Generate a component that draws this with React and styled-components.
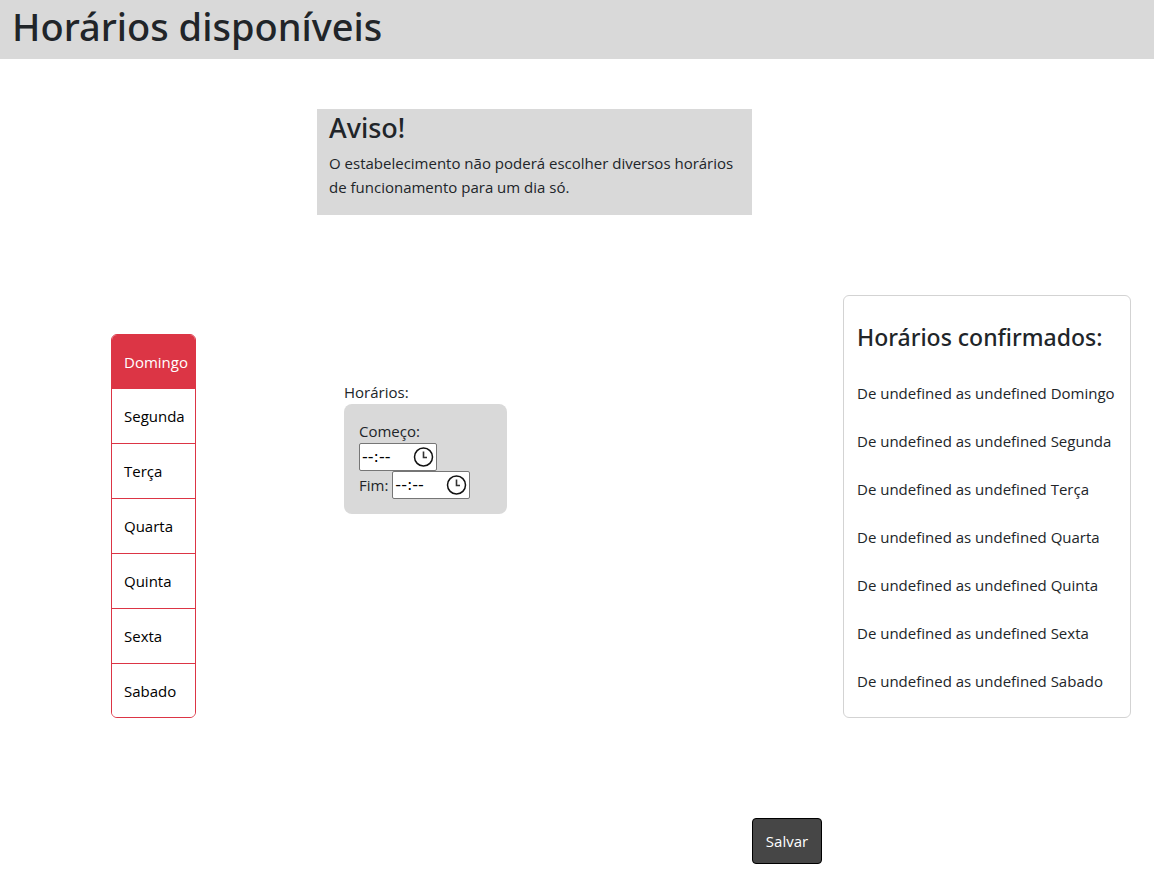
import React, { useState } from "react";
import styled, { createGlobalStyle } from "styled-components";

const GlobalStyle = createGlobalStyle`
  *, *::before, *::after { box-sizing: border-box; }
  body {
    margin: 0;
    background: #fff;
    color: #212529;
    font-family: "Open Sans", "Noto Sans", sans-serif;
    font-size: 15px;
    line-height: 24px;
  }
  h1, h2, h3, p, ul { margin: 0; padding: 0; }
  h1, h2, h3 { font-family: "Noto Sans", sans-serif; font-weight: 500; }
  ul { list-style: none; }
  button, input { font: inherit; }
`;

const Header = styled.header`
  background: #d9d9d9;
  padding: 2px 12px 9px;
`;

const PageTitle = styled.h1`
  font-size: 38px;
  line-height: 48px;
`;

const Main = styled.main`
  display: grid;
  grid-template-columns: 317fr 435fr 402fr;
  padding: 50px 0 24px;
`;

const Notice = styled.section`
  grid-column: 2;
  grid-row: 1;
  background: #d9d9d9;
  padding: 0 12px 16px;
`;

const NoticeTitle = styled.h2`
  padding-top: 2px;
  margin-bottom: 6px;
  font-size: 27px;
  line-height: 34px;
`;

const DayList = styled.ul`
  grid-column: 1;
  grid-row: 2;
  align-self: end;
  justify-self: center;
  width: 85px;
  margin-left: -10px;
  border: 1px solid #dc3545;
  border-radius: 6px;
  overflow: hidden;
`;

const DayButton = styled.button`
  display: block;
  width: 100%;
  padding: 15px 0 15px 12px;
  border: 0;
  background: ${(p) => (p.$active ? "#dc3545" : "#fff")};
  color: ${(p) => (p.$active ? "#fff" : "#000")};
  text-align: left;
  white-space: nowrap;
  cursor: pointer;
`;

const DayItem = styled.li`
  & + & { border-top: 1px solid #dc3545; }
  &:first-child ${DayButton}, &:last-child ${DayButton} { padding-bottom: 14px; }
`;

const Times = styled.section`
  grid-column: 2;
  grid-row: 2;
  justify-self: start;
  margin: 165px 0 0 27px;
`;

const TimesBox = styled.div`
  width: 163px;
  padding: 15px;
  border-radius: 8px;
  background: #d9d9d9;
`;

const Field = styled.div`
  display: flex;
  flex-wrap: wrap;
  align-items: center;
  column-gap: 4px;
`;

const FieldLabel = styled.label`
  flex: ${(p) => (p.$above ? "0 0 100%" : "none")};
`;

const TimeControl = styled.span`
  display: flex;
  align-items: center;
  justify-content: space-between;
  width: 78px;
  height: 28px;
  padding: 0 2px;
  border: 1px solid #767676;
  border-radius: 2px;
  background: #fff;
  color: #000;
`;

const TimeInput = styled.input`
  width: 44px;
  height: 24px;
  padding: 0;
  border: 0;
  outline: 0;
  background: transparent;
  color: inherit;
  font-family: "DejaVu Sans", sans-serif;
  font-size: 16px;
`;

const Confirmed = styled.section`
  grid-column: 3;
  grid-row: 2;
  justify-self: end;
  width: 288px;
  margin: 80px 23px 0 0;
  padding: 26px 0 24px 13px;
  border: 1px solid #d3d3d3;
  border-radius: 6px;
`;

const ConfirmedTitle = styled.h3`
  margin-bottom: 29px;
  font-size: 23px;
  line-height: 30px;
`;

const ConfirmedList = styled.ul`
  display: grid;
  row-gap: 24px;
`;

const SaveButton = styled.button`
  grid-column: 3;
  grid-row: 3;
  justify-self: start;
  width: 70px;
  height: 46px;
  margin-top: 100px;
  padding: 0;
  border: 1px solid #000;
  border-radius: 4px;
  background: #464646;
  color: #fff;
  cursor: pointer;
`;

const days = ["Domingo", "Segunda", "Terça", "Quarta", "Quinta", "Sexta", "Sabado"];

function ClockIcon() {
  return (
    <svg width="21" height="21" viewBox="0 0 21 21" fill="none" aria-hidden="true">
      <circle cx="10.5" cy="10" r="9" stroke="#111" strokeWidth="1.5" />
      <path d="M10.5 4.5v6H14" stroke="#333" strokeWidth="1.6" />
    </svg>
  );
}

function TimeField({ id, label, above }) {
  return (
    <Field>
      <FieldLabel htmlFor={id} $above={above}>{label}</FieldLabel>
      <TimeControl>
        <TimeInput id={id} type="text" inputMode="numeric" defaultValue="--:--" />
        <ClockIcon />
      </TimeControl>
    </Field>
  );
}

export default function App() {
  const [selected, setSelected] = useState("Domingo");
  return (
    <>
      <GlobalStyle />
      <Header>
        <PageTitle>Horários disponíveis</PageTitle>
      </Header>
      <Main>
        <Notice>
          <NoticeTitle>Aviso!</NoticeTitle>
          <p>O estabelecimento não poderá escolher diversos horários de funcionamento para um dia só.</p>
        </Notice>
        <DayList>
          {days.map((day) => (
            <DayItem key={day}>
              <DayButton
                type="button"
                $active={day === selected}
                aria-pressed={day === selected}
                onClick={() => setSelected(day)}
              >
                {day}
              </DayButton>
            </DayItem>
          ))}
        </DayList>
        <Times>
          <p>Horários:</p>
          <TimesBox>
            <TimeField id="start" label="Começo:" above />
            <TimeField id="end" label="Fim:" />
          </TimesBox>
        </Times>
        <Confirmed>
          <ConfirmedTitle>Horários confirmados:</ConfirmedTitle>
          <ConfirmedList>
            {days.map((day) => (
              <li key={day}>De undefined as undefined {day}</li>
            ))}
          </ConfirmedList>
        </Confirmed>
        <SaveButton type="button">Salvar</SaveButton>
      </Main>
    </>
  );
}
